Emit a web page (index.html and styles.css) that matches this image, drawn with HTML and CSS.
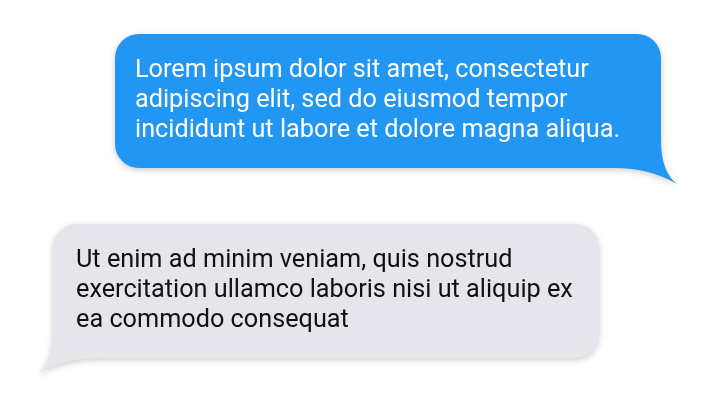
FILE: index.html
```html
<!DOCTYPE html>
<html lang="en">
<head>
<meta charset="utf-8">
<link rel="stylesheet" href="styles.css">
<title>Chat</title>
</head>
<body>
<main class="chat">
  <div class="bubble bubble--sent">
    <p class="bubble__text">Lorem ipsum dolor sit amet, consectetur adipiscing elit, sed do eiusmod tempor incididunt ut labore et dolore magna aliqua.</p>
    <svg class="tail tail--sent" width="70" height="50" viewBox="0 0 70 50"><path d="M54 0 L54 6 Q54 38 70 50 Q43 34 8 34 L0 34 L0 0 Z" fill="#2196f3"/></svg>
  </div>
  <div class="bubble bubble--received">
    <p class="bubble__text">Ut enim ad minim veniam, quis nostrud exercitation ullamco laboris nisi ut aliquip ex ea commodo consequat</p>
    <svg class="tail tail--received" width="70" height="50" viewBox="0 0 70 50"><path d="M16 0 L16 6 Q16 38 0 50 Q27 34 62 34 L70 34 L70 0 Z" fill="#e6e5eb"/></svg>
  </div>
</main>
</body>
</html>
```
FILE: styles.css
```css
html, body {
  margin: 0;
  padding: 0;
  background: #ffffff;
}
body {
  min-height: 100vh;
}
.chat {
  display: flex;
  flex-direction: column;
  gap: 56px;
  padding: 34px 56px 51px 53px;
  font-family: Roboto, "Noto Sans", sans-serif;
}
.bubble {
  position: relative;
  width: 546px;
  box-sizing: border-box;
  padding: 20px 20px 24px;
  filter: drop-shadow(0 2px 3px rgba(0, 0, 0, 0.2));
}
.bubble--sent {
  align-self: flex-end;
  background: #2196f3;
  color: #ffffff;
  border-radius: 24px 24px 0 24px;
}
.bubble--received {
  align-self: flex-start;
  padding-left: 23px;
  background: #e6e5eb;
  color: #111111;
  border-radius: 24px 24px 24px 0;
}
.bubble__text {
  margin: 0;
  font-size: 25.25px;
  line-height: 30px;
  position: relative;
  z-index: 1;
}
.tail {
  position: absolute;
  bottom: -16px;
}
.tail--sent { right: -16px; }
.tail--received { left: -16px; }
```
